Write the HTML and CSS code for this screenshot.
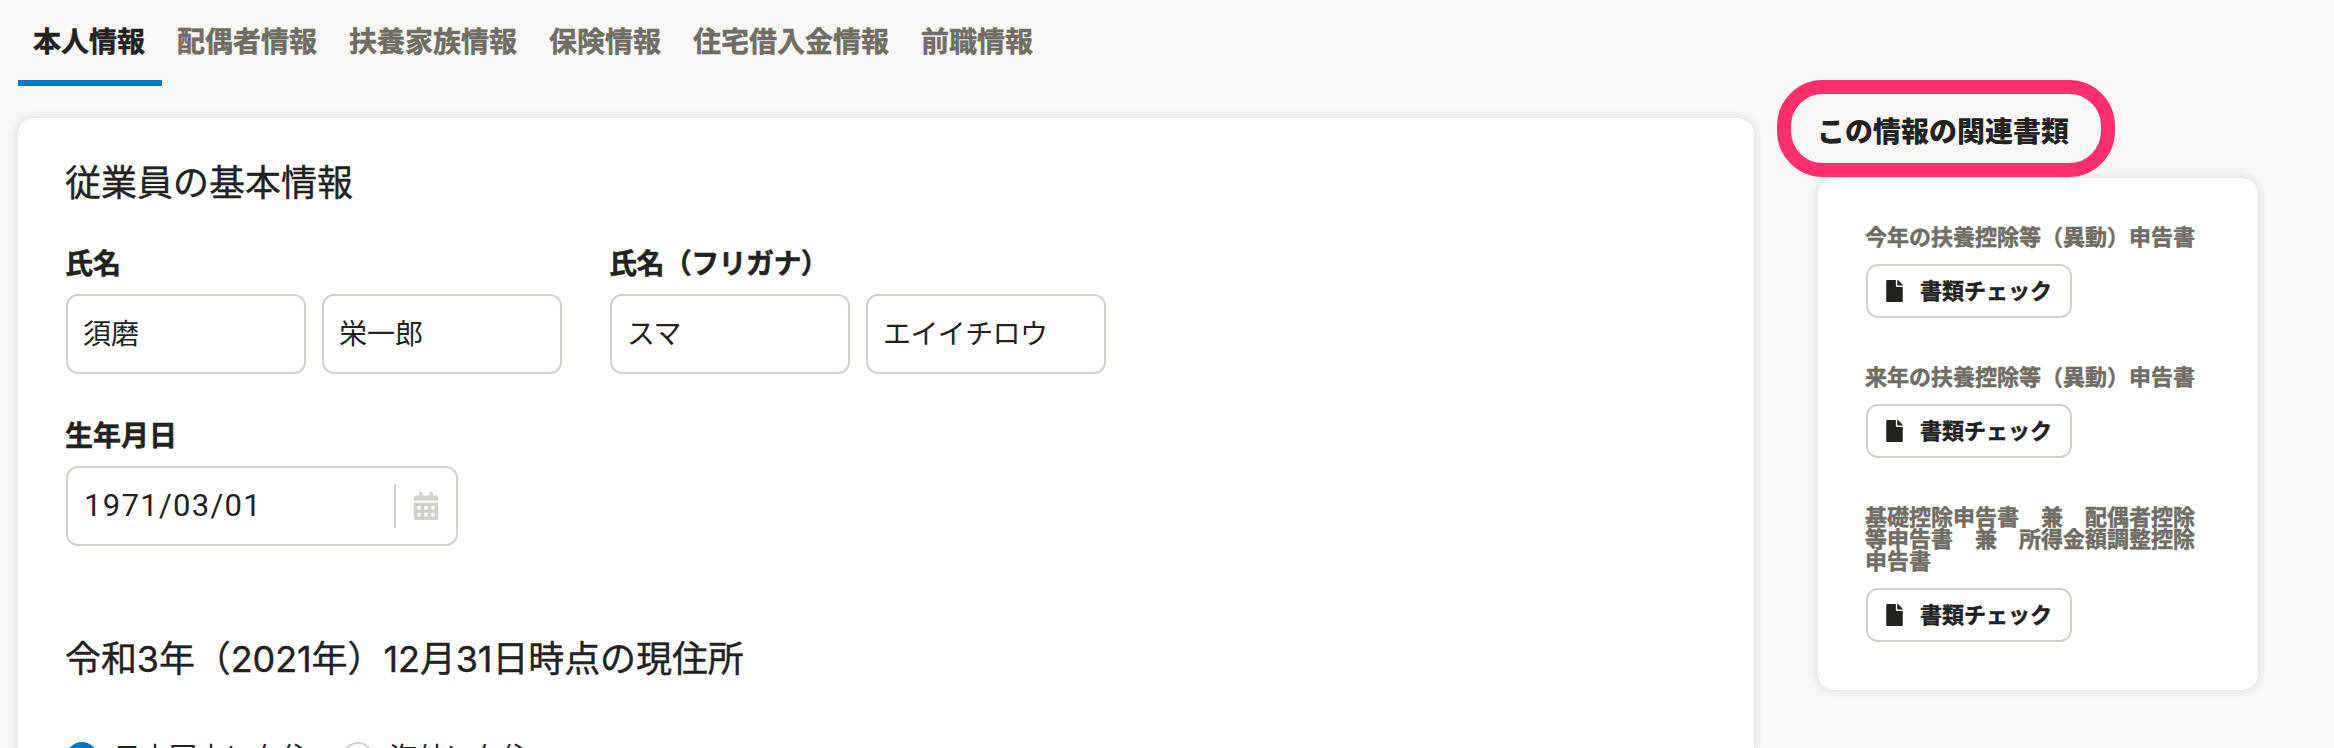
FILE: index.html
```html
<!DOCTYPE html>
<html lang="ja">
<head>
<meta charset="utf-8">
<title>本人情報</title>
<link rel="stylesheet" href="styles.css">
</head>
<body>
<svg class="sprite" aria-hidden="true">
  <symbol id="icon-file" viewBox="0 0 384 512"><path d="M224 136V0H24C10.700 0 0 10.700 0 24v464c0 13.300 10.700 24 24 24h336c13.300 0 24-10.700 24-24V160H248c-13.200 0-24-10.800-24-24zm160-14.100v6.100H256V0h6.100c6.400 0 12.500 2.500 17 7l97.900 98c4.500 4.500 7 10.600 7 16.900z"/></symbol>
  <symbol id="icon-calendar" viewBox="0 0 448 512"><path d="M0 464c0 26.500 21.500 48 48 48h352c26.500 0 48-21.500 48-48V192H0v272zm320-196c0-6.600 5.400-12 12-12h40c6.600 0 12 5.400 12 12v40c0 6.600-5.400 12-12 12h-40c-6.600 0-12-5.400-12-12v-40zm0 128c0-6.600 5.400-12 12-12h40c6.600 0 12 5.400 12 12v40c0 6.600-5.400 12-12 12h-40c-6.600 0-12-5.400-12-12v-40zM192 268c0-6.600 5.400-12 12-12h40c6.600 0 12 5.400 12 12v40c0 6.600-5.400 12-12 12h-40c-6.600 0-12-5.400-12-12v-40zm0 128c0-6.600 5.400-12 12-12h40c6.600 0 12 5.400 12 12v40c0 6.600-5.400 12-12 12h-40c-6.600 0-12-5.400-12-12v-40zM64 268c0-6.600 5.400-12 12-12h40c6.600 0 12 5.400 12 12v40c0 6.600-5.400 12-12 12H76c-6.600 0-12-5.400-12-12v-40zm0 128c0-6.600 5.400-12 12-12h40c6.600 0 12 5.400 12 12v40c0 6.600-5.400 12-12 12H76c-6.600 0-12-5.400-12-12v-40zM400 64h-48V16c0-8.800-7.200-16-16-16h-32c-8.800 0-16 7.200-16 16v48H160V16c0-8.800-7.200-16-16-16h-32c-8.800 0-16 7.200-16 16v48H48C21.500 64 0 85.500 0 112v48h448v-48c0-26.500-21.500-48-48-48z"/></symbol>
</svg>
<div class="page">
  <main class="main">
    <nav class="tabs">
      <a class="tab is-active">本人情報</a>
      <a class="tab">配偶者情報</a>
      <a class="tab">扶養家族情報</a>
      <a class="tab">保険情報</a>
      <a class="tab">住宅借入金情報</a>
      <a class="tab">前職情報</a>
    </nav>
    <section class="card form">
      <h2 class="heading">従業員の基本情報</h2>
      <div class="names">
        <div class="field">
          <div class="label">氏名</div>
          <div class="inputs"><div class="input">須磨</div><div class="input">栄一郎</div></div>
        </div>
        <div class="field kana">
          <div class="label">氏名（フリガナ）</div>
          <div class="inputs"><div class="input">スマ</div><div class="input">エイイチロウ</div></div>
        </div>
      </div>
      <div class="field birth">
        <div class="label">生年月日</div>
        <div class="input date"><span class="date-value">1971/03/01</span><span class="date-icon"><svg><use href="#icon-calendar"/></svg></span></div>
      </div>
      <h2 class="heading address">令和3年（2021年）12月31日時点の現住所</h2>
      <div class="radios">
        <div class="radio"><span class="dot is-checked"></span>日本国内に在住</div>
        <div class="radio"><span class="dot"></span>海外に在住</div>
      </div>
    </section>
  </main>
  <aside class="side">
    <h3 class="side-title">この情報の関連書類</h3>
    <div class="card docs">
      <div class="doc">
        <div class="doc-name">今年の扶養控除等（異動）申告書</div>
        <div class="button"><svg><use href="#icon-file"/></svg>書類チェック</div>
      </div>
      <div class="doc">
        <div class="doc-name">来年の扶養控除等（異動）申告書</div>
        <div class="button"><svg><use href="#icon-file"/></svg>書類チェック</div>
      </div>
      <div class="doc">
        <div class="doc-name">基礎控除申告書　兼　配偶者控除等申告書　兼　所得金額調整控除申告書</div>
        <div class="button"><svg><use href="#icon-file"/></svg>書類チェック</div>
      </div>
    </div>
  </aside>
</div>
</body>
</html>
```
FILE: styles.css
```css
*, *::after { box-sizing: border-box; }
body {
  margin: 0;
  height: 748px;
  overflow: hidden;
  background: #f8f7f6;
  color: #23221e;
  font: 28px/28px Inter, "Noto Sans CJK JP", sans-serif;
}
.sprite { display: none; }
svg { display: block; }
.page {
  display: grid;
  grid-template-columns: 1736px 440px;
  column-gap: 64px;
  padding-left: 18px;
  height: 748px;
}
.tabs { display: flex; }
.tab {
  height: 86px;
  padding: 28px 17px 0 15px;
  border-bottom: 6px solid transparent;
  color: #706d65;
  font-weight: 700;
}
.tab.is-active { color: #23221e; border-color: #0077c7; }
.tab, .label, .doc-name, .button { -webkit-text-stroke: .5px currentColor; }
.card {
  background: #fff;
  border-radius: 16px;
  box-shadow: 0 0 8px rgba(35, 34, 30, .14);
}
.form {
  height: 630px;
  margin-top: 32px;
  padding: 47px 48px 0;
  border-radius: 16px 16px 0 0;
}
.heading {
  margin: 0 0 0 -1px;
  font-size: 36px;
  line-height: 36px;
  font-weight: 400;
  -webkit-text-stroke: .4px currentColor;
}
.names { display: flex; gap: 48px; margin-top: 49px; }
.label { font-weight: 700; margin: 0 0 16px -1px; }
.kana { letter-spacing: -.6px; }
.inputs { display: flex; gap: 16px; }
.input {
  display: flex;
  align-items: center;
  width: 240px;
  height: 80px;
  padding: 0 15px;
  border: 2px solid #d2d2cd;
  border-radius: 12px;
}
.birth { margin-top: 48px; }
.date { width: 392px; justify-content: space-between; padding: 0 17px 0 16px; }
.date-value { font: 400 31px/30px Roboto, sans-serif; letter-spacing: 1.3px; }
.date-icon {
  display: flex;
  align-items: center;
  height: 44px;
  padding-left: 17px;
  border-left: 2px solid #d2d2cd;
  fill: #d2d2cd;
}
.date-icon svg { width: 26px; height: 28px; }
.address { margin-top: 95px; letter-spacing: -.1px; }
.radios { display: flex; gap: 33px; margin-top: 65px; }
.radio { display: flex; align-items: center; gap: 15px; height: 32px; }
.dot { width: 32px; height: 32px; border: 2px solid #d2d2cd; border-radius: 50%; background: #fff; }
.dot.is-checked { border: 10px solid #0077c7; }
.side { padding-top: 118px; }
.side-title {
  position: relative;
  margin: 0 0 0 -1px;
  font-size: 28px;
  line-height: 28px;
  font-weight: 900;
}
/* highlight ring around the sidebar title */
.side-title::after {
  content: "";
  position: absolute;
  left: -40px;
  top: -38px;
  width: 338px;
  height: 97px;
  border: 14px solid #ff2e6c;
  border-radius: 46px;
}
.docs {
  display: flex;
  flex-direction: column;
  gap: 48px;
  height: 512px;
  margin-top: 32px;
  padding: 48px;
}
.doc-name {
  color: #706d65;
  font-size: 22px;
  line-height: 22px;
  font-weight: 700;
  margin: 0 0 16px -1px;
}
.button {
  display: flex;
  align-items: center;
  gap: 17px;
  width: 206px;
  height: 54px;
  padding-left: 18px;
  border: 2px solid #d2d2cd;
  border-radius: 12px;
  font-size: 22px;
  font-weight: 700;
}
.button svg { width: 17px; height: 22px; fill: #23221e; }
```
